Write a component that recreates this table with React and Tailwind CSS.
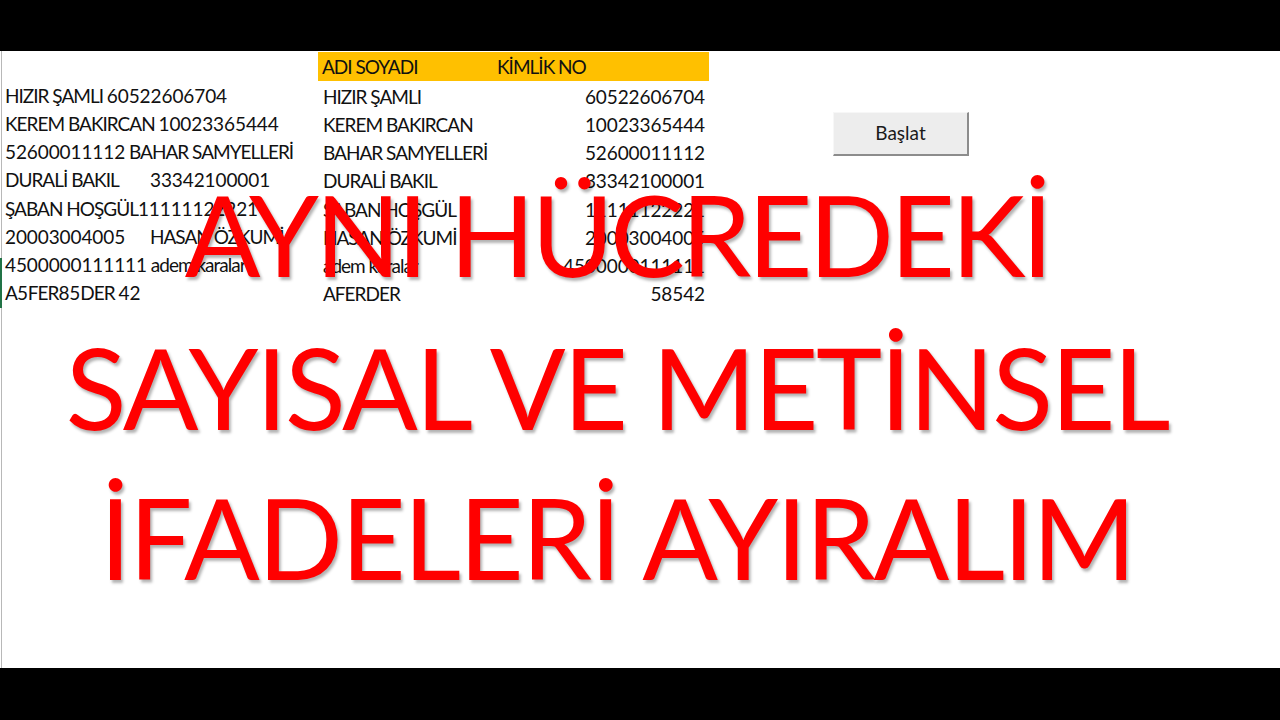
import React from "react";

function T({ children }) {
  const parts = String(children).split(/(\d+)/).filter((p) => p !== "");
  return (
    <>
      {parts.map((p, i) =>
        /^\d+$/.test(p) ? (
          <span key={i} className="tracking-[-0.1px]">{p}</span>
        ) : (
          <span key={i} className="tracking-[-1px]">{p}</span>
        )
      )}
    </>
  );
}

const leftRows = [
  { a: "HIZIR ŞAMLI 60522606704" },
  { a: "KEREM BAKIRCAN 10023365444" },
  { a: "52600011112 BAHAR SAMYELLERİ" },
  { a: "DURALİ BAKIL", b: "33342100001" },
  { a: "ŞABAN HOŞGÜL11111122221" },
  { a: "20003004005", b: "HASAN ÖZKUMİ" },
  { a: "4500000111111 adem karalar" },
  { a: "A5FER85DER 42" },
];

const rightRows = [
  ["HIZIR ŞAMLI", "60522606704"],
  ["KEREM BAKIRCAN", "10023365444"],
  ["BAHAR SAMYELLERİ", "52600011112"],
  ["DURALİ BAKIL", "33342100001"],
  ["ŞABAN HOŞGÜL", "11111122221"],
  ["HASAN ÖZKUMİ", "20003004005"],
  ["adem karalar", "4500000111111"],
  ["AFERDER", "58542"],
];

export default function App() {
  return (
    <div
      className="w-[1280px] h-[720px] flex flex-col bg-black overflow-hidden"
      style={{ fontFamily: "Lato, 'Open Sans', sans-serif" }}
    >
      <div className="h-[51px] bg-black shrink-0" />
      <div className="relative h-[617px] bg-white shrink-0 flex">
        {/* left gridline */}
        <div className="w-[1px] shrink-0" />
        <div className="w-[1px] shrink-0 bg-[#b8b8b8]" />
        <div className="absolute left-0 top-[207px] w-[2px] h-[50px] bg-[#217346]" />

        {/* column A */}
        <div className="w-[316px] shrink-0 flex flex-col text-[19px] text-[#111]">
          <div className="h-[29px]" />
          {leftRows.map((r, i) => (
            <div key={i} className="h-[28.2px] flex items-center pt-[4px] pl-[3px] whitespace-nowrap">
              {r.b ? (
                <>
                  <span className="w-[145px] shrink-0"><T>{r.a}</T></span>
                  <span><T>{r.b}</T></span>
                </>
              ) : (
                <span><T>{r.a}</T></span>
              )}
            </div>
          ))}
        </div>

        {/* column B table */}
        <div className="w-[391px] shrink-0 flex flex-col text-[19px] text-[#111]">
          <div className="h-[29px] mt-[1px] bg-[#ffc000] flex items-center pt-[2px] pl-[4px]">
            <span className="w-[175px] shrink-0"><T>ADI SOYADI</T></span>
            <span><T>KİMLİK NO</T></span>
          </div>
          {rightRows.map(([n, id], i) => (
            <div key={i} className="h-[28.2px] flex items-center justify-between pt-[4px] pl-[5px] pr-[4px] whitespace-nowrap">
              <span><T>{n}</T></span>
              <span><T>{id}</T></span>
            </div>
          ))}
        </div>

        {/* button */}
        <div className="ml-[124px] mt-[61px]">
          <div className="w-[136px] h-[44px] bg-[#ededed] border-t-[1px] border-l-[1px] border-t-[#f7f7f7] border-l-[#f7f7f7] border-b-[2px] border-r-[2px] border-b-[#8c8c8c] border-r-[#8c8c8c] flex items-center justify-center text-[19px] text-[#1a1a1a] pb-[1px]">
            Başlat
          </div>
        </div>

        {/* overlay title */}
        <div className="absolute inset-0 flex flex-col items-center pointer-events-none text-[#ff0000] text-[112px] leading-[112px] whitespace-nowrap [text-shadow:2px_3px_3px_rgba(0,0,0,0.3)] pr-[46px]">
          <div className="mt-[127px] tracking-[-3.7px]">AYNI HÜCREDEKİ</div>
          <div className="mt-[41px] tracking-[-2.3px]">SAYISAL VE METİNSEL</div>
          <div className="mt-[38px] tracking-[-2px]">İFADELERİ AYIRALIM</div>
        </div>
      </div>
      <div className="flex-1 bg-black" />
    </div>
  );
}
